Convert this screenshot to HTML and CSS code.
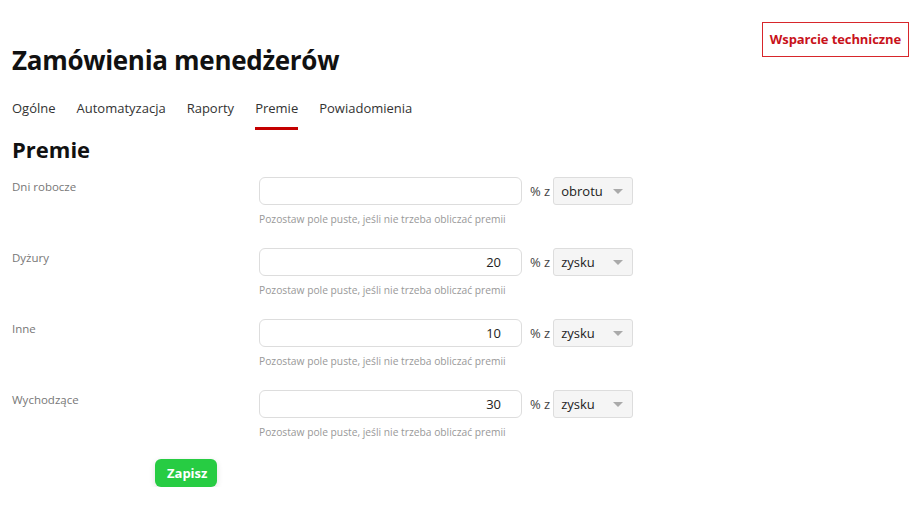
FILE: index.html
```html
<!DOCTYPE html>
<html lang="pl">
<head>
  <meta charset="UTF-8">
  <meta name="viewport" content="width=device-width, initial-scale=1.0">
  <title>Zamówienia menedżerów</title>
  <link rel="stylesheet" href="styles.css">
</head>
<body>
  <div class="page">
    <div class="top">
      <h1 class="title">Zamówienia menedżerów</h1>
      <a class="support" href="#">Wsparcie techniczne</a>
    </div>

    <nav class="tabs">
      <a href="#" class="tab">Ogólne</a>
      <a href="#" class="tab">Automatyzacja</a>
      <a href="#" class="tab">Raporty</a>
      <a href="#" class="tab active">Premie</a>
      <a href="#" class="tab">Powiadomienia</a>
    </nav>

    <h2 class="section-title">Premie</h2>

    <form class="bonus-form">
      <div class="form-row">
        <label class="row-label">Dni robocze</label>
        <div class="row-field">
          <div class="field-line">
            <input type="text" class="num-input" value="">
            <span class="unit">% z</span>
            <div class="select">obrotu<span class="caret"></span></div>
          </div>
          <p class="hint">Pozostaw pole puste, jeśli nie trzeba obliczać premii</p>
        </div>
      </div>

      <div class="form-row">
        <label class="row-label">Dyżury</label>
        <div class="row-field">
          <div class="field-line">
            <input type="text" class="num-input" value="20">
            <span class="unit">% z</span>
            <div class="select">zysku<span class="caret"></span></div>
          </div>
          <p class="hint">Pozostaw pole puste, jeśli nie trzeba obliczać premii</p>
        </div>
      </div>

      <div class="form-row">
        <label class="row-label">Inne</label>
        <div class="row-field">
          <div class="field-line">
            <input type="text" class="num-input" value="10">
            <span class="unit">% z</span>
            <div class="select">zysku<span class="caret"></span></div>
          </div>
          <p class="hint">Pozostaw pole puste, jeśli nie trzeba obliczać premii</p>
        </div>
      </div>

      <div class="form-row">
        <label class="row-label">Wychodzące</label>
        <div class="row-field">
          <div class="field-line">
            <input type="text" class="num-input" value="30">
            <span class="unit">% z</span>
            <div class="select">zysku<span class="caret"></span></div>
          </div>
          <p class="hint">Pozostaw pole puste, jeśli nie trzeba obliczać premii</p>
        </div>
      </div>

      <button type="submit" class="save">Zapisz</button>
    </form>
  </div>
</body>
</html>
```

FILE: styles.css
```css
body {
  font-family: "Open Sans", "Noto Sans", Arial, sans-serif;
  background-color: #fff;
  color: #111;
  margin: 0;
}
.page {
  padding: 22px 12px 0 12px;
}
.top {
  display: flex;
  justify-content: space-between;
  align-items: flex-start;
}
.title {
  font-size: 26px;
  font-weight: 700;
  margin: 20px 0 0 0;
  line-height: 36px;
  letter-spacing: -0.3px;
}
.support {
  border: 1px solid #d7262b;
  color: #c8121b;
  font-size: 13px;
  font-weight: 700;
  text-decoration: none;
  padding: 8px 7px 8px 7px;
  line-height: 17px;
  margin-right: -1px;
  letter-spacing: -0.1px;
}
.tabs {
  display: flex;
  gap: 21px;
  margin-top: 19px;
}
.tab {
  font-size: 13px;
  color: #333;
  text-decoration: none;
  padding: 2px 0 10px 0;
  border-bottom: 3px solid transparent;
}
.tab.active {
  border-bottom-color: #c40000;
}
.section-title {
  font-size: 22px;
  font-weight: 700;
  margin: 4px 0 0 0;
  line-height: 30px;
}
.bonus-form {
  margin-top: 13px;
}
.form-row {
  display: flex;
  height: 71px;
}
.row-label {
  width: 247px;
  font-size: 11.5px;
  color: #777;
  padding-top: 2px;
}
.row-field {
  display: flex;
  flex-direction: column;
}
.field-line {
  display: flex;
  align-items: center;
}
.num-input {
  width: 263px;
  height: 28px;
  box-sizing: border-box;
  border: 1px solid #ddd;
  border-radius: 6px;
  padding: 0 20px 0 8px;
  font-family: inherit;
  font-size: 13px;
  color: #222;
  text-align: right;
}
.unit {
  font-size: 13px;
  color: #444;
  margin: 0 3px 0 8px;
}
.select {
  width: 80px;
  height: 28px;
  box-sizing: border-box;
  border: 1px solid #ddd;
  border-radius: 3px;
  background-color: #f5f5f5;
  font-size: 13px;
  color: #222;
  padding: 0 7px;
  display: flex;
  align-items: center;
  justify-content: space-between;
}
.caret {
  width: 0;
  height: 0;
  border-left: 5px solid transparent;
  border-right: 5px solid transparent;
  border-top: 5px solid #aaa;
  margin-right: 2px;
}
.hint {
  font-size: 10.25px;
  color: #999;
  margin: 7px 0 0 0;
}
.save {
  margin: -2px 0 0 143px;
  background-color: #27cc43;
  color: #fff;
  border: none;
  border-radius: 6px;
  font-family: inherit;
  font-size: 13px;
  font-weight: 700;
  padding: 0 12px;
  height: 28px;
  width: 62px;
  box-shadow: 0 2px 6px rgba(0, 0, 0, 0.12);
  cursor: pointer;
}
```
